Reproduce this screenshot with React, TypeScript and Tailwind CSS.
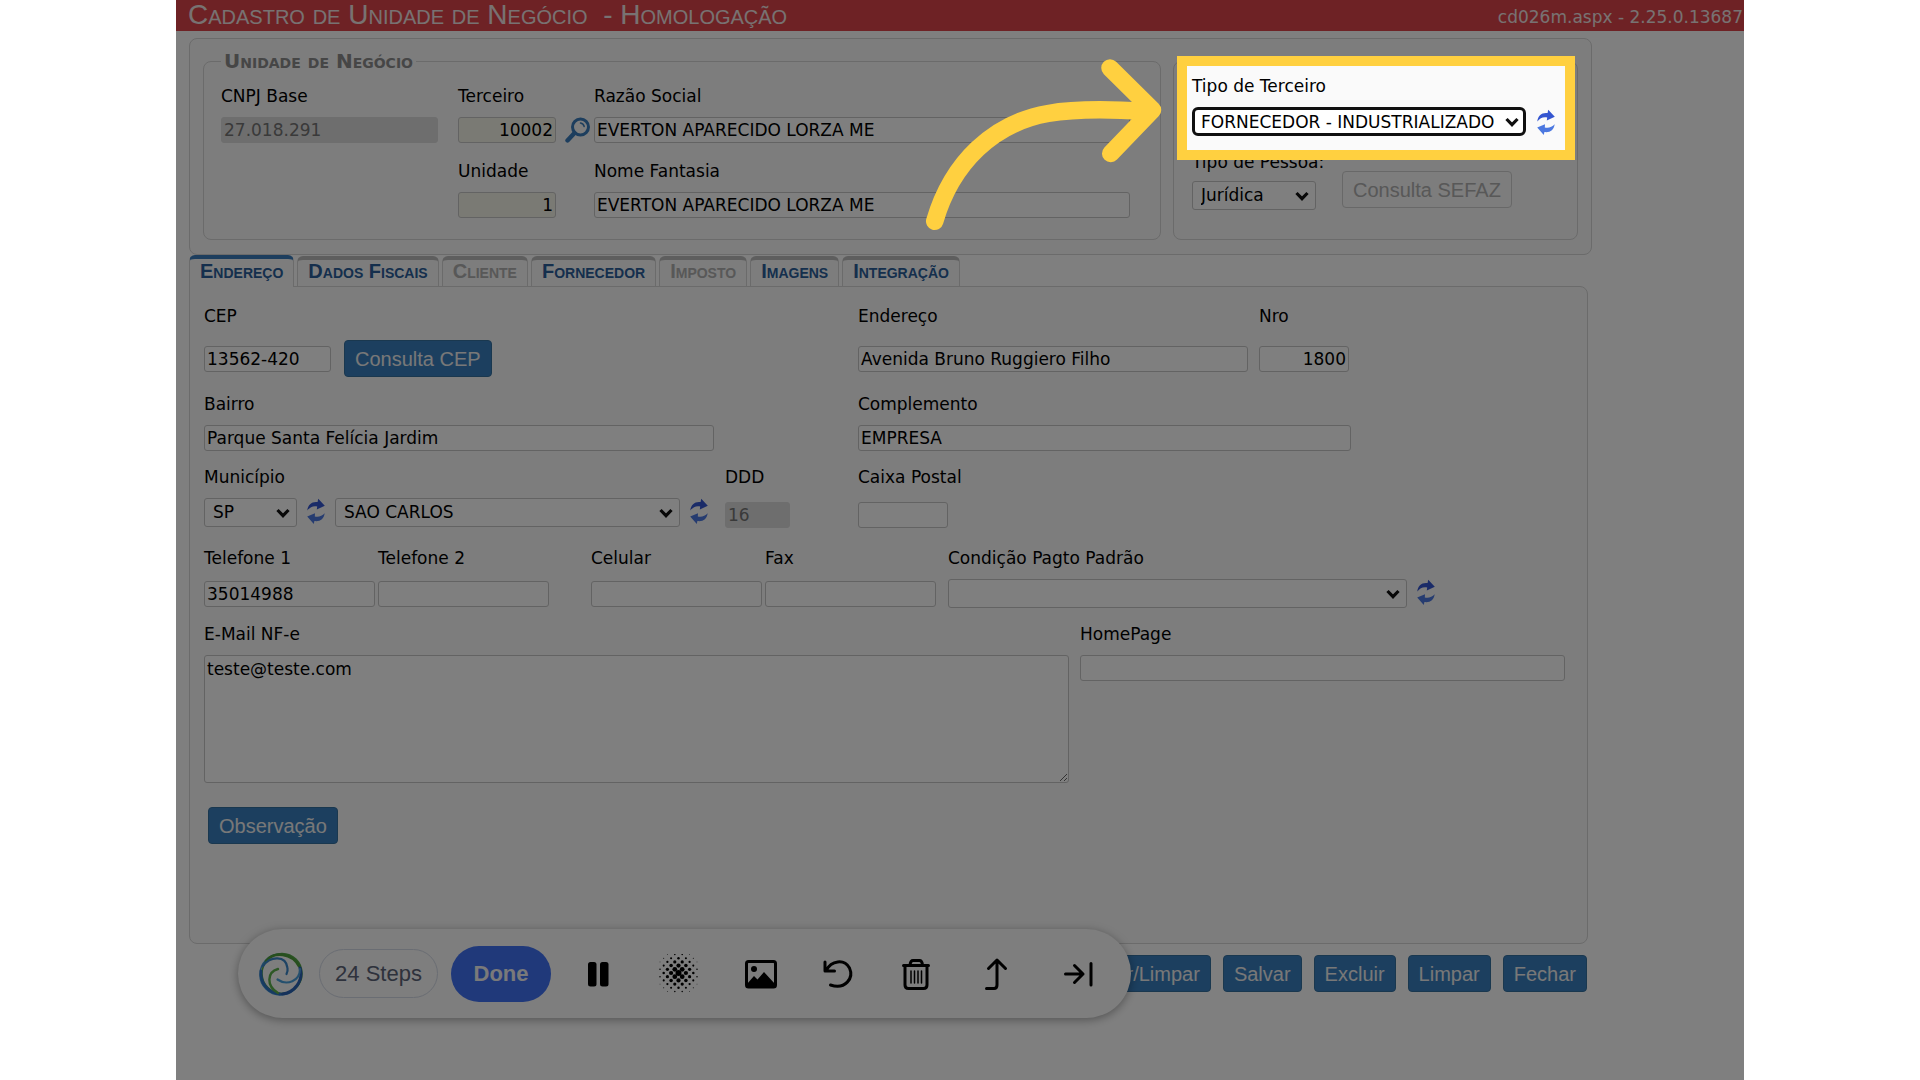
import { useId, useState } from 'react';
import type { ReactNode } from 'react';
import clsx from 'clsx';

interface Tab {
  name: string;
  disabled?: boolean;
}

const TABS: Tab[] = [
  { name: 'Endereço' },
  { name: 'Dados Fiscais' },
  { name: 'Cliente', disabled: true },
  { name: 'Fornecedor' },
  { name: 'Imposto', disabled: true },
  { name: 'Imagens' },
  { name: 'Integração' },
];

const ACTIONS = ['Salvar/Limpar', 'Salvar', 'Excluir', 'Limpar', 'Fechar'];

function Label({ htmlFor, children }: { htmlFor: string; children: ReactNode }) {
  return (
    <label htmlFor={htmlFor} className="block h-6 whitespace-nowrap leading-6">
      {children}
    </label>
  );
}

interface TextFieldProps {
  label: string;
  value?: string;
  width: string;
  row?: string;
  right?: boolean;
  disabled?: boolean;
  shaded?: boolean;
  after?: ReactNode;
}

function TextField({ label, value = '', width, row, right, disabled, shaded, after }: TextFieldProps) {
  const id = useId();
  return (
    <div className="flex flex-col gap-[9px]">
      <Label htmlFor={id}>{label}</Label>
      <div className={clsx('flex items-center', row)}>
        <input
          id={id}
          type="text"
          defaultValue={value}
          disabled={disabled}
          className={clsx(
            'h-[26px] rounded-[3px] border px-[2px]',
            width,
            right && 'text-right',
            disabled ? 'border-[#dcdcdc] bg-[#dcdcdc] text-[#747474]' : 'border-[#c6c6c6]',
            !disabled && (shaded ? 'bg-[#f5f5e9]' : 'bg-white'),
          )}
        />
        {after}
      </div>
    </div>
  );
}

interface PickerProps {
  id: string;
  value: string;
  width: string;
  focused?: boolean;
  label?: string;
}

function Picker({ id, value, width, focused, label }: PickerProps) {
  return (
    <div className={clsx('relative', width)}>
      <select
        id={id}
        aria-label={label}
        defaultValue={value}
        className={clsx(
          'h-[29px] w-full appearance-none bg-white',
          focused ? 'rounded-md border-3 border-[#101010] pl-[6px]' : 'rounded-[3px] border border-[#c6c6c6] pl-2',
        )}
      >
        <option>{value}</option>
      </select>
      <svg viewBox="0 0 14 10" className="pointer-events-none absolute top-[10px] right-[7px] h-[10px] w-[14px]">
        <path d="M1.5 2 L7 7.6 L12.5 2" fill="none" stroke="#101010" strokeWidth="3.2" />
      </svg>
    </div>
  );
}

function RefreshButton({ label }: { label: string }) {
  return (
    <button type="button" aria-label={label} className="shrink-0">
      <svg viewBox="0 0 18 26" className="h-[26px] w-[18px]">
        <path d="M0.3 12.5 C0.8 6.5 5 3.2 10.6 4 L11.2 0.8 L17.8 7.8 L9.8 11.6 L10.2 8.4 C6 7.6 3 9 0.3 12.5 Z" fill="#3556d0" />
        <path d="M17.7 15.2 C16.8 21 13 23.8 7.4 23 L6.8 26 L0.2 18.6 L8 15.2 L7.8 18.4 C11.8 19.2 15 18 17.7 15.2 Z" fill="#4c78e0" />
      </svg>
    </button>
  );
}

function SearchButton() {
  return (
    <button type="button" aria-label="Pesquisar terceiro" className="mr-1 ml-[9px]">
      <svg viewBox="0 0 26 26" className="size-[26px]" fill="none" stroke="#3a7cbc" strokeLinecap="round">
        <circle cx="15.5" cy="10" r="8" strokeWidth="3" />
        <path d="M9.5 16 L2.5 23.5" strokeWidth="4.4" />
        <path d="M15.5 6 Q18.5 6.5 19.2 9.5" strokeWidth="1.5" />
      </svg>
    </button>
  );
}

function BlueButton({ children }: { children: ReactNode }) {
  return (
    <button
      type="button"
      className="h-[37px] rounded-[4px] border border-[#35709f] bg-[#397fbf] px-[10px] font-[Liberation_Sans,Arial,sans-serif] text-xl leading-none whitespace-nowrap text-[#f0f0f0]"
    >
      {children}
    </button>
  );
}

function Callout() {
  return (
    <div className="pointer-events-none absolute -top-[6px] left-[3px] z-20 h-[104px] w-[398px] border-10 border-[#ffd040] shadow-[0_0_0_2400px_rgba(0,0,0,0.5)]">
      <svg
        viewBox="0 0 250 190"
        className="absolute -top-[16px] right-[395px] h-[190px] w-[250px]"
        fill="none"
        stroke="#ffd040"
        strokeWidth="17.5"
        strokeLinecap="round"
        strokeLinejoin="round"
      >
        <path d="M14.7 171.3 C32 112 74 73 128 63.5 C160 58 195 59.5 225 61.5" />
        <path d="M190 18 L232.5 60 L190.7 103.5" />
      </svg>
    </div>
  );
}

function BusinessUnit() {
  return (
    <fieldset className="min-w-0 flex-1 rounded-lg border border-[#d6d6d6] px-[17px] pt-[13px] pb-[21px]">
      <legend className="h-5 px-[3px] text-xl leading-5 font-bold text-[#8c8c8c] [font-variant:small-caps]">
        Unidade de Negócio
      </legend>
      <div className="grid grid-cols-[237px_136px_1fr] gap-y-4">
        <TextField label="CNPJ Base" value="27.018.291" width="w-[217px]" disabled />
        <TextField label="Terceiro" value="10002" width="w-[98px]" right shaded after={<SearchButton />} />
        <TextField label="Razão Social" value="EVERTON APARECIDO LORZA ME" width="w-[536px]" />
        <div className="col-start-2">
          <TextField label="Unidade" value="1" width="w-[98px]" right shaded />
        </div>
        <TextField label="Nome Fantasia" value="EVERTON APARECIDO LORZA ME" width="w-[536px]" />
      </div>
    </fieldset>
  );
}

function PersonType() {
  return (
    <fieldset className="relative mt-[10px] w-[405px] rounded-lg border border-[#d6d6d6] px-[18px] pt-3">
      <div className="flex flex-col gap-[9px]">
        <Label htmlFor="tipo-terceiro">Tipo de Terceiro</Label>
        <div className="flex items-center gap-[11px]">
          <Picker id="tipo-terceiro" value="FORNECEDOR - INDUSTRIALIZADO" width="w-[334px]" focused />
          <RefreshButton label="Atualizar tipo de terceiro" />
        </div>
      </div>
      <div className="mt-[14px] flex items-end gap-[26px]">
        <div className="flex w-[124px] flex-col gap-[7px]">
          <Label htmlFor="tipo-pessoa">Tipo de Pessoa:</Label>
          <Picker id="tipo-pessoa" value="Jurídica" width="w-full" />
        </div>
        <button
          type="button"
          disabled
          className="mb-[2px] h-[37px] rounded-[4px] border border-[#d0d0d0] px-[10px] font-[Liberation_Sans,Arial,sans-serif] text-xl leading-none text-[#b0b0b0]"
        >
          Consulta SEFAZ
        </button>
      </div>
      <Callout />
    </fieldset>
  );
}

function TabBar() {
  const [active, setActive] = useState('Endereço');
  return (
    <div role="tablist" className="flex items-end gap-[3px] font-[Liberation_Sans,Arial,sans-serif]">
      {TABS.map((tab) => (
        <button
          key={tab.name}
          type="button"
          role="tab"
          aria-selected={tab.name === active}
          disabled={tab.disabled}
          onClick={() => setActive(tab.name)}
          className={clsx(
            'rounded-t-md border-x border-t-4 border-x-[#d6d6d6] bg-[#fafafa] px-[10px] pb-1 text-xl leading-none font-bold [font-variant:small-caps]',
            tab.name === active ? '-mb-px h-[32px] border-t-[#3a7cbc]' : 'h-[30px] border-t-[#bcbcbc]',
            tab.disabled ? 'text-[#b0b0b0]' : 'text-[#2a5e9a]',
          )}
        >
          {tab.name}
        </button>
      ))}
    </div>
  );
}

function AddressPanel() {
  return (
    <div className="mr-1 h-[658px] rounded-b-lg rounded-tr-lg border border-[#d6d6d6] bg-[#fafafa] px-[14px] pt-[17px]">
      <div className="flex flex-col gap-[14px]">
        <div className="grid grid-cols-[654px_1fr]">
          <TextField
            label="CEP"
            value="13562-420"
            width="w-[127px] mr-[13px]"
            row="h-[41px] pt-[2px]"
            after={<BlueButton>Consulta CEP</BlueButton>}
          />
          <div className="flex gap-[11px]">
            <TextField label="Endereço" value="Avenida Bruno Ruggiero Filho" width="w-[390px]" row="h-[41px] pt-[2px]" />
            <TextField label="Nro" value="1800" width="w-[90px]" row="h-[41px] pt-[2px]" right />
          </div>
        </div>

        <div className="grid grid-cols-[654px_1fr]">
          <TextField label="Bairro" value="Parque Santa Felícia Jardim" width="w-[510px]" />
          <TextField label="Complemento" value="EMPRESA" width="w-[493px]" />
        </div>

        <div className="grid grid-cols-[521px_133px_1fr]">
          <div className="flex flex-col gap-[9px]">
            <Label htmlFor="uf">Município</Label>
            <div className="flex items-start gap-[10px]">
              <Picker id="uf" value="SP" width="w-[93px]" />
              <RefreshButton label="Atualizar UF" />
              <Picker id="cidade" value="SAO CARLOS" width="w-[345px]" label="Cidade" />
              <RefreshButton label="Atualizar município" />
            </div>
          </div>
          <TextField label="DDD" value="16" width="w-[65px]" row="h-[34px]" disabled />
          <TextField label="Caixa Postal" width="w-[90px]" row="h-[34px]" />
        </div>

        <div className="flex">
          <div className="flex w-[387px] gap-[3px]">
            <TextField label="Telefone 1" value="35014988" width="w-[171px]" row="h-[29px]" />
            <TextField label="Telefone 2" width="w-[171px]" row="h-[29px]" />
          </div>
          <div className="flex w-[357px] gap-[3px]">
            <TextField label="Celular" width="w-[171px]" row="h-[29px]" />
            <TextField label="Fax" width="w-[171px]" row="h-[29px]" />
          </div>
          <div className="flex flex-col gap-[9px]">
            <Label htmlFor="condicao">Condição Pagto Padrão</Label>
            <div className="flex items-start gap-[10px]">
              <Picker id="condicao" value="" width="w-[459px]" />
              <RefreshButton label="Atualizar condição de pagamento" />
            </div>
          </div>
        </div>

        <div className="flex gap-[11px]">
          <div className="flex flex-col gap-[9px]">
            <Label htmlFor="email">E-Mail NF-e</Label>
            <textarea
              id="email"
              defaultValue="teste@teste.com"
              className="block h-[128px] w-[865px] rounded-[3px] border border-[#c6c6c6] bg-white px-[2px] py-[3px] leading-5"
            />
          </div>
          <TextField label="HomePage" width="w-[485px]" />
        </div>
      </div>
      <div className="mt-6 ml-1">
        <BlueButton>Observação</BlueButton>
      </div>
    </div>
  );
}

function SwirlLogo() {
  return (
    <svg viewBox="0 0 46 46" className="size-[46px]" fill="none" strokeLinecap="round">
      <circle cx="22.5" cy="23.5" r="20.5" stroke="#3f95d8" strokeWidth="1.6" />
      <circle cx="24" cy="22.5" r="20" stroke="#57a84a" strokeWidth="1.6" />
      <path d="M8 10 C16 0 34 2 41 15" stroke="#4f9f3c" strokeWidth="2.8" />
      <path d="M42 17 C46 30 36 42 24 43" stroke="#2a62b4" strokeWidth="3" />
      <path d="M3 20 C2 32 10 42 22 43" stroke="#2f74c4" strokeWidth="2.8" />
      <path d="M5 15 C12 5 28 4 29.5 17 Q30 20 28.5 23" stroke="#3a86c8" strokeWidth="2.2" />
      <path d="M42 18 C42 30 29 35 19.5 28.5" stroke="#4aa0dc" strokeWidth="2.2" />
      <path d="M20 18 C9 21 8 35 20 42" stroke="#5cb04c" strokeWidth="2.4" />
    </svg>
  );
}

// checkerboard of dots that shrink away from the centre
const DOTS = Array.from({ length: 121 }, (_, i) => ({ x: (i % 11) - 5, y: Math.floor(i / 11) - 5 }))
  .filter((d) => (d.x + d.y) % 2 === 0)
  .map((d) => ({ cx: 20.5 + d.x * 3.7, cy: 19 + d.y * 3.7, r: 3 * (1 - Math.hypot(d.x, d.y) / 6.8) }))
  .filter((d) => d.r > 0.3);

const TOOLS: { name: string; icon: ReactNode }[] = [
  {
    name: 'Pausar',
    icon: (
      <g fill="#000">
        <rect x="10" y="8" width="8.5" height="24.5" rx="2.5" />
        <rect x="22" y="8" width="8.5" height="24.5" rx="2.5" />
      </g>
    ),
  },
  {
    name: 'Desfocar',
    icon: (
      <g fill="#000">
        {DOTS.map((d) => (
          <circle key={`${d.cx}-${d.cy}`} cx={d.cx} cy={d.cy} r={d.r} />
        ))}
      </g>
    ),
  },
  {
    name: 'Imagem',
    icon: (
      <g>
        <rect x="8.5" y="7.5" width="29" height="25.5" rx="2" strokeWidth="3" />
        <circle cx="16" cy="15" r="3" fill="#000" stroke="none" />
        <path d="M9 33 V30 L16 22 L19.5 25.5 L26 18 L37 30 V33 Z" fill="#000" stroke="none" />
      </g>
    ),
  },
  {
    name: 'Desfazer',
    icon: <path d="M7 8 V17 H16.5 M8 16.5 C13.5 6.5 26 4.5 31.5 14 C36 24 27.5 36 12.5 31" strokeWidth="3" />,
  },
  {
    name: 'Excluir passo',
    icon: (
      <g>
        <path d="M5.5 11.5 H30.5 M7 12 V31 Q7 34.5 10.5 34.5 H25.5 Q29 34.5 29 31 V12" strokeWidth="3" />
        <path d="M12 11 Q12.5 6.5 15 6.5 H21.5 Q24 6.5 24.5 11" strokeWidth="3" />
        <path d="M13 17 V29 M16.5 17 V29 M20 17 V29 M23.5 17 V29" strokeWidth="1.5" />
      </g>
    ),
  },
  {
    name: 'Subir',
    icon: <path d="M8.5 34.5 H16 Q19 34.5 19 31 V6 M10.5 14.5 L19 6 L27.5 14.5" strokeWidth="3" />,
  },
  {
    name: 'Recolher',
    icon: <path d="M7.5 20 H25 M16.5 11.5 L25 20 L16.5 28.5 M33 9.5 V31" strokeWidth="3" />,
  },
];

function RecorderBar() {
  return (
    <div className="absolute bottom-[62px] left-[62px] z-10 flex h-[89px] w-[893px] items-center rounded-full bg-[#fcfcfc] pl-5 font-[Liberation_Sans,Arial,sans-serif] text-[22px] shadow-[0_2px_10px_rgba(0,0,0,0.35)]">
      <SwirlLogo />
      <button type="button" className="ml-[15px] h-[49px] w-[119px] rounded-full border border-[#d4dae6] text-[#5c6478]">
        24 Steps
      </button>
      <button type="button" className="ml-[13px] h-14 w-[100px] rounded-full bg-[#4072f4] font-bold text-[#f4f4f4]">
        Done
      </button>
      <div className="ml-[27px] flex gap-10">
        {TOOLS.map((tool) => (
          <button key={tool.name} type="button" aria-label={tool.name}>
            <svg viewBox="0 0 40 40" className="size-10" fill="none" strokeLinecap="round" strokeLinejoin="round">
              <g stroke={tool.name === 'Desfocar' || tool.name === 'Pausar' ? 'none' : '#000'}>{tool.icon}</g>
            </svg>
          </button>
        ))}
      </div>
    </div>
  );
}

export default function App() {
  return (
    <div className="min-h-screen bg-white px-44 font-[DejaVu_Sans,Verdana,sans-serif] text-[17px] text-black">
      <div className="relative min-h-screen overflow-hidden bg-white">
        <header className="flex h-[31px] items-center justify-between bg-[#dc444a] pr-px pl-3 leading-none text-[#f0e4e4]">
          <h1 className="pb-[2px] font-[Liberation_Sans,Arial,sans-serif] text-[28px] whitespace-pre [font-variant:small-caps]">
            {'Cadastro de Unidade de Negócio  - Homologação'}
          </h1>
          <span className="pt-1">cd026m.aspx - 2.25.0.13687</span>
        </header>
        <main className="mt-[7px] mr-[152px] ml-[13px]">
          <div className="flex gap-3 rounded-lg border border-[#d6d6d6] bg-[#fafafa] px-[13px] pt-3 pb-[14px]">
            <BusinessUnit />
            <PersonType />
          </div>
          <TabBar />
          <AddressPanel />
          <div className="mt-[11px] mr-[5px] flex justify-end gap-3">
            {ACTIONS.map((name) => (
              <BlueButton key={name}>{name}</BlueButton>
            ))}
          </div>
        </main>
        <RecorderBar />
      </div>
    </div>
  );
}
